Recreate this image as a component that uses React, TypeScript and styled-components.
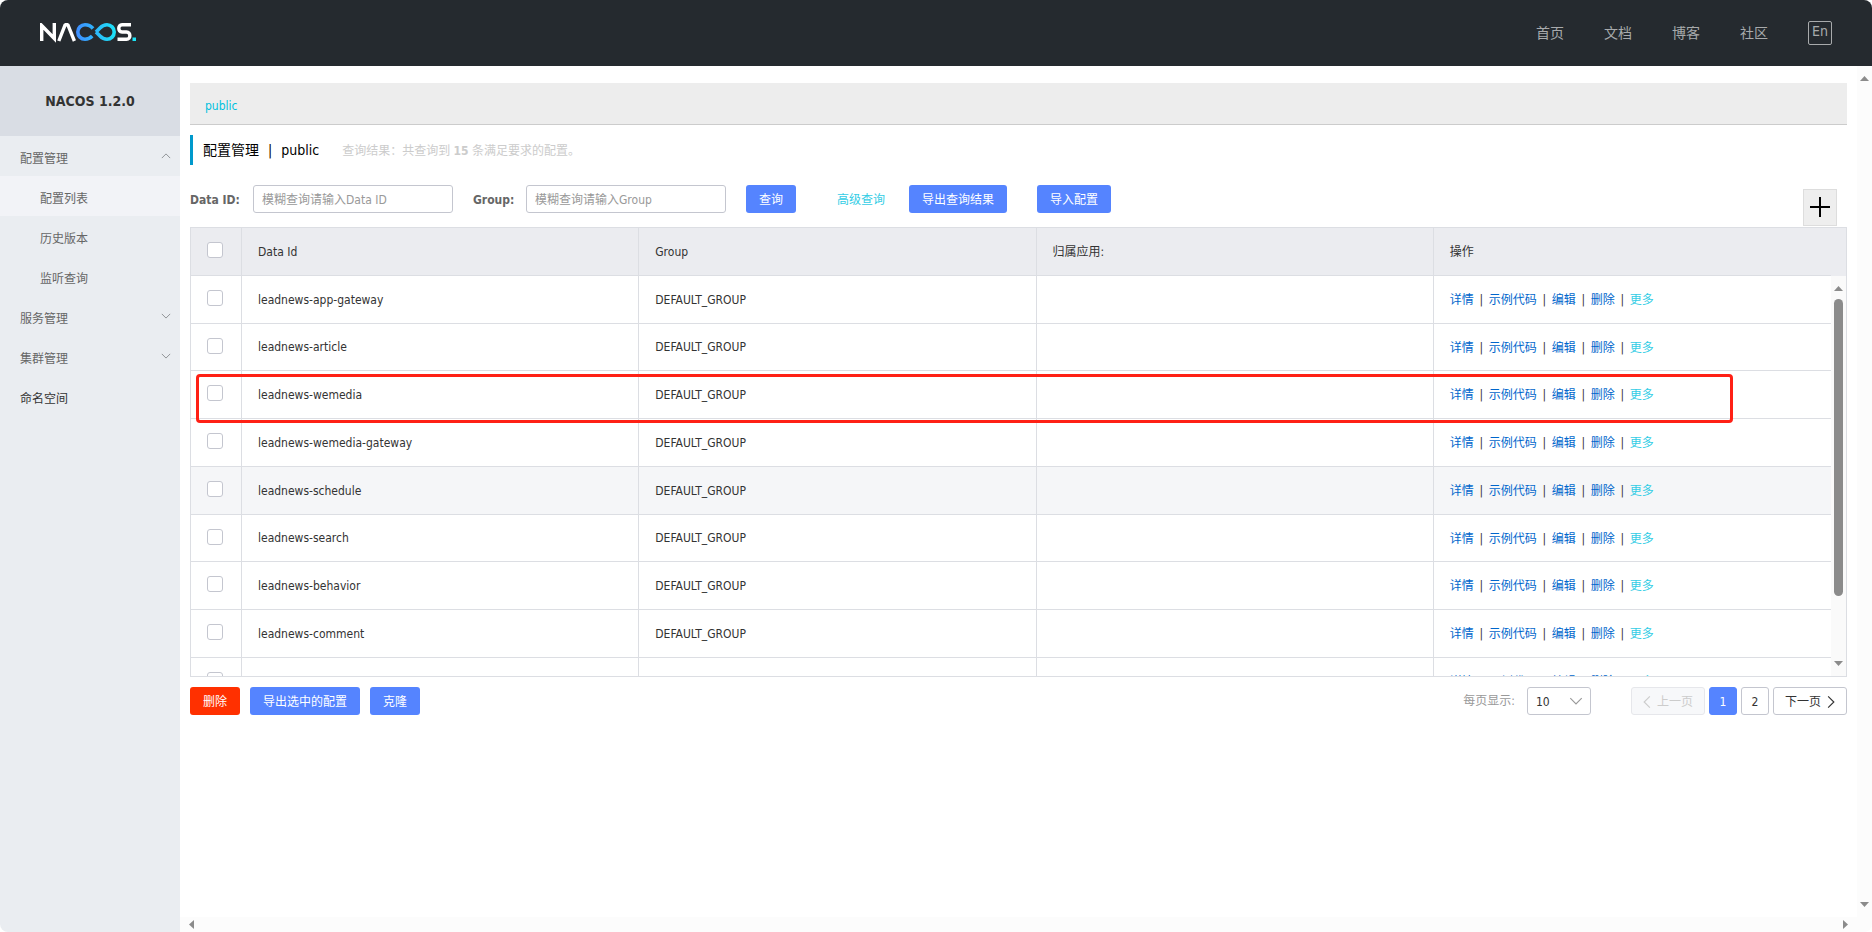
import React from "react";
import styled, { createGlobalStyle, css } from "styled-components";

const colors = {
  ink: "#333333",
  muted: "#666666",
  line: "#dcdee3",
  control: "#c4c6cf",
  primary: "#5584ff",
  danger: "#ff3000",
  cyan: "#33cde5",
  link: "#0066cc",
};

const GlobalStyle = createGlobalStyle`
  *, *::before, *::after { box-sizing: border-box; }
  body {
    margin: 0;
    background: #ffffff;
    color: ${colors.ink};
    font-family: "DejaVu Sans Condensed", "Noto Sans CJK SC", sans-serif;
    font-size: 12px;
    line-height: 16px;
  }
  button, input, select { font: inherit; color: inherit; }
  a { text-decoration: none; color: inherit; }
`;

const Page = styled.div`
  display: flex;
  flex-direction: column;
  min-height: 100vh;
`;

const Header = styled.header`
  display: flex;
  align-items: center;
  justify-content: space-between;
  height: 66px;
  padding: 0 40px;
  border-radius: 8px 8px 0 0;
  background: #252a2f;
`;

const Nav = styled.nav`
  display: flex;
  align-items: center;
  gap: 40px;
  color: #a8aaac;
  font-size: 14px;
`;

const LangButton = styled.button`
  width: 24px;
  height: 24px;
  padding: 0 0 3px;
  border: 1px solid #a8aaac;
  border-radius: 2px;
  background: none;
  line-height: 19px;
`;

const Body = styled.div`
  display: flex;
  flex: 1;
`;

const Sidebar = styled.aside`
  flex: none;
  width: 180px;
  background: #eaedf1;
  border-bottom-left-radius: 8px;
`;

const Product = styled.h1`
  margin: 0;
  background: #d9dde4;
  font-size: 14px;
  line-height: 70px;
  text-align: center;
`;

const Menu = styled.ul`
  margin: 0;
  padding: 0;
  list-style: none;
`;

const MenuLink = styled.a<{ $child?: boolean; $active?: boolean; $dark?: boolean }>`
  display: flex;
  align-items: center;
  justify-content: space-between;
  height: 40px;
  padding: 0 9px 0 ${(p) => (p.$child ? 40 : 20)}px;
  background: ${(p) => (p.$active ? "#f2f3f7" : "transparent")};
  color: ${(p) => (p.$dark ? colors.ink : colors.muted)};
`;

const MenuLabel = styled.span`
  padding-top: 6px;
`;

const Main = styled.main`
  display: grid;
  flex: 1;
  min-width: 0;
  grid-template-columns: minmax(0, 1fr) 15px;
  grid-template-rows: 1fr 15px;
`;

const Content = styled.div`
  padding: 17px 10px 0;
`;

const PageRail = styled.div`
  display: flex;
  flex-direction: column;
  justify-content: space-between;
  align-items: center;
  padding: 10px 0;
  background: #fcfcfc;
`;

const PageBottomRail = styled.div`
  display: flex;
  grid-column: 1 / 3;
  justify-content: space-between;
  align-items: center;
  padding: 0 24px 0 9px;
  border-bottom-right-radius: 8px;
  background: #fcfcfc;
`;

const Arrow = styled.i<{ $dir: "up" | "down" | "left" | "right" }>`
  display: block;
  flex: none;
  background: #8b8b8b;
  ${(p) =>
    p.$dir === "up" || p.$dir === "down"
      ? css`
          width: 9px;
          height: 5px;
        `
      : css`
          width: 5px;
          height: 9px;
        `}
  clip-path: ${(p) =>
    ({
      up: "polygon(50% 0, 100% 100%, 0 100%)",
      down: "polygon(0 0, 100% 0, 50% 100%)",
      left: "polygon(0 50%, 100% 0, 100% 100%)",
      right: "polygon(0 0, 100% 50%, 0 100%)",
    })[p.$dir]};
`;

const NamespaceBar = styled.div`
  height: 42px;
  padding: 15px;
  border-bottom: 1px solid #cccccc;
  background: #ededed;
  color: #00c1de;
`;

const TitleRow = styled.div`
  display: flex;
  align-items: center;
  height: 30px;
  margin-top: 10px;
  padding-left: 10px;
  border-left: 3px solid #0099cc;
`;

const Title = styled.h2`
  display: flex;
  gap: 9px;
  margin: 0 23px 0 0;
  color: #000000;
  font-size: 14px;
  font-weight: 400;
`;

const Summary = styled.span`
  padding-top: 2px;
  color: #cccccc;
`;

const SearchForm = styled.form`
  display: flex;
  align-items: flex-start;
  height: 42px;
  margin-top: 20px;
  padding-right: 10px;
`;

const Field = styled.label<{ $labelWidth: number }>`
  display: grid;
  grid-template-columns: ${(p) => p.$labelWidth}px 200px;
  align-items: center;
  margin-right: 20px;
  color: ${colors.muted};
  font-weight: 700;
`;

const FieldName = styled.span`
  padding-top: 2px;
`;

const TextInput = styled.input`
  height: 28px;
  padding: 2px 8px 0;
  border: 1px solid ${colors.control};
  border-radius: 3px;
  background: #ffffff;
  font-weight: 400;
  &::placeholder {
    color: #999999;
    opacity: 1;
  }
`;

const Button = styled.button<{ $danger?: boolean }>`
  height: 28px;
  padding: 2px 13px 0;
  border: 0;
  border-radius: 3px;
  background: ${(p) => (p.$danger ? colors.danger : colors.primary)};
  color: #ffffff;
  white-space: nowrap;
`;

const AdvancedLink = styled.a`
  margin: 0 24px 0 40px;
  padding: 7px 0 5px 1px;
  color: ${colors.cyan};
`;

const ImportButton = styled(Button)`
  margin-left: 30px;
`;

const AddButton = styled.button`
  display: grid;
  place-items: center;
  width: 34px;
  height: 37px;
  margin: 4px 0 0 auto;
  padding: 0 0 2px;
  border: 1px solid #dddddd;
  background: #eeeeee;
  color: #000000;
`;

const TableFrame = styled.div`
  position: relative;
  border: 1px solid ${colors.line};
`;

const TableHead = styled.div`
  padding-right: 15px;
  background: #ebecf0;
`;

const TableBody = styled.div`
  display: flex;
  height: 400px;
`;

const Viewport = styled.div`
  flex: 1;
  min-width: 0;
  overflow-y: auto;
  scrollbar-width: none;
`;

const Rail = styled.div`
  display: flex;
  flex: none;
  flex-direction: column;
  align-items: center;
  width: 15px;
  padding: 10px 0;
  background: #fafafa;
`;

const Thumb = styled.div`
  width: 9px;
  height: 297px;
  margin: 8px 0 auto;
  border-radius: 5px;
  background: #8b8b8b;
`;

const Table = styled.table`
  width: 100%;
  table-layout: fixed;
  border-collapse: separate;
  border-spacing: 0;
`;

const cell = css`
  padding: 0 16px;
  border-right: 1px solid ${colors.line};
  border-bottom: 1px solid ${colors.line};
  font-weight: 400;
  text-align: left;
  vertical-align: middle;
  white-space: nowrap;
  &:first-child {
    width: 51px;
  }
  &:last-child {
    border-right: 0;
  }
`;

const Th = styled.th`
  ${cell}
`;

const Td = styled.td`
  ${cell}
`;

const Row = styled.tr<{ $hover?: boolean }>`
  height: 48px;
  background: ${(p) => (p.$hover ? "#f5f6f8" : "transparent")};
  tbody &:nth-child(4n + 2) {
    height: 47px;
  }
`;

const Checkbox = styled.input`
  display: block;
  width: 16px;
  height: 16px;
  margin: 0 0 3px;
  appearance: none;
  border: 1px solid ${colors.control};
  border-radius: 3px;
  background: #ffffff;
`;

const Actions = styled.div`
  display: flex;
  gap: 5px;
  padding-top: 1px;
  color: ${colors.ink};
`;

const Divider = styled.span`
  width: 5px;
  text-align: center;
`;

const ActionLink = styled.a<{ $more?: boolean }>`
  color: ${(p) => (p.$more ? colors.cyan : colors.link)};
`;

const Highlight = styled.div`
  position: absolute;
  top: 146px;
  right: 113px;
  left: 5px;
  height: 49px;
  border: 3px solid #ff2015;
  border-radius: 4px;
  pointer-events: none;
`;

const Footer = styled.div`
  display: flex;
  justify-content: space-between;
  margin-top: 10px;
`;

const ButtonGroup = styled.div`
  display: flex;
  gap: 10px;
`;

const Pagination = styled.div`
  display: flex;
  gap: 4px;
`;

const PageSize = styled.label`
  display: flex;
  align-items: center;
  gap: 12px;
  margin-right: 36px;
  color: #999999;
`;

const SelectBox = styled.span`
  display: grid;
  grid-template-columns: 1fr 28px;
  align-items: center;
  width: 64px;
  height: 28px;
  border: 1px solid ${colors.control};
  border-radius: 3px;
  color: #999999;
`;

const Select = styled.select`
  grid-area: 1 / 1 / 2 / 3;
  height: 26px;
  padding: 1px 8px 0;
  appearance: none;
  border: 0;
  background: none;
  color: ${colors.ink};
`;

const SelectIcon = styled.span`
  display: flex;
  grid-area: 1 / 2 / 2 / 3;
  justify-content: center;
  pointer-events: none;
`;

const PageButton = styled.button<{ $current?: boolean; $wide?: boolean }>`
  display: flex;
  align-items: center;
  justify-content: center;
  gap: 6px;
  width: ${(p) => (p.$wide ? 74 : 28)}px;
  height: 28px;
  padding: 1px 0 0;
  border: 1px solid ${(p) => (p.$current ? colors.primary : colors.control)};
  border-radius: 3px;
  background: ${(p) => (p.$current ? colors.primary : "#ffffff")};
  color: ${(p) => (p.$current ? "#ffffff" : colors.ink)};
  &:disabled {
    border-color: #e6e7eb;
    background: #f7f8fa;
    color: #cccccc;
  }
`;

const chevronPaths = {
  up: "M1 6 L6 1 L11 6",
  down: "M1 1 L6 6 L11 1",
  left: "M6 1 L1 6 L6 11",
  right: "M1 1 L6 6 L1 11",
};

function Chevron({ dir, size, color = "currentColor" }: { dir: keyof typeof chevronPaths; size: number; color?: string }) {
  const horizontal = dir === "left" || dir === "right";
  return (
    <svg
      width={horizontal ? Math.round(size * 0.6) : size}
      height={horizontal ? size : Math.round(size * 0.6)}
      viewBox={horizontal ? "0 0 7 12" : "0 0 12 7"}
      fill="none"
      stroke={color}
      strokeWidth="1"
      aria-hidden="true"
    >
      <path d={chevronPaths[dir]} />
    </svg>
  );
}

function Logo() {
  return (
    <svg width="96" height="20" viewBox="0 0 96 20" fill="none" role="img" aria-label="NACOS">
      <defs>
        <linearGradient id="loop" x1="36" y1="0" x2="76" y2="0" gradientUnits="userSpaceOnUse">
          <stop offset="0" stopColor="#3f8cff" />
          <stop offset="1" stopColor="#1be4f7" />
        </linearGradient>
      </defs>
      <g stroke="#ffffff" strokeWidth="3.4">
        <path d="M1.700 18V2.500L14.300 15.500V0" />
        <path d="M18.800 18L25.200 1.700H27.800L34.400 18" strokeLinejoin="bevel" />
        <path d="M91 1.700H82C77.700 1.700 77.700 9 82 9H86.500C91 9 91 16.300 86.500 16.300H77.500" />
      </g>
      <path
        d="M53 5.500C50.800 2.900 48 1.800 45 1.800C41 1.800 37.800 4.900 37.800 9S41 16.200 45 16.200C48 16.200 50.200 15.100 52.200 13M56 9L60 4.900C62 2.900 64 1.800 67 1.800C71 1.800 74.200 4.900 74.200 9S71 16.200 67 16.200C64 16.200 62 15.100 60 13L56 9"
        stroke="url(#loop)"
        strokeWidth="3.600"
      />
      <rect x="92.500" y="14.500" width="3.500" height="3.500" fill="#1be4f7" />
    </svg>
  );
}

function Plus() {
  return (
    <svg width="20" height="20" viewBox="0 0 20 20" stroke="currentColor" strokeWidth="2" aria-hidden="true">
      <path d="M10 0V20M0 10H20" />
    </svg>
  );
}

const rows = [
  "leadnews-app-gateway",
  "leadnews-article",
  "leadnews-wemedia",
  "leadnews-wemedia-gateway",
  "leadnews-schedule",
  "leadnews-search",
  "leadnews-behavior",
  "leadnews-comment",
  "leadnews-admin-dateway",
];

const menu: { label: string; child?: boolean; active?: boolean; dark?: boolean; arrow?: "up" | "down" }[] = [
  { label: "配置管理", arrow: "up" },
  { label: "配置列表", child: true, active: true },
  { label: "历史版本", child: true },
  { label: "监听查询", child: true },
  { label: "服务管理", arrow: "down" },
  { label: "集群管理", arrow: "down" },
  { label: "命名空间", dark: true },
];

const actions = ["详情", "示例代码", "编辑", "删除"];

export default function App() {
  return (
    <Page>
      <GlobalStyle />
      <Header>
        <Logo />
        <Nav>
          {["首页", "文档", "博客", "社区"].map((label) => (
            <a href="#" key={label}>
              {label}
            </a>
          ))}
          <LangButton type="button">En</LangButton>
        </Nav>
      </Header>
      <Body>
        <Sidebar>
          <Product>NACOS 1.2.0</Product>
          <Menu>
            {menu.map((item) => (
              <li key={item.label}>
                <MenuLink href="#" $child={item.child} $active={item.active} $dark={item.dark}>
                  <MenuLabel>{item.label}</MenuLabel>
                  {item.arrow && <Chevron dir={item.arrow} size={10} color="#808285" />}
                </MenuLink>
              </li>
            ))}
          </Menu>
        </Sidebar>
        <Main>
          <Content>
            <NamespaceBar>
              <a href="#">public</a>
            </NamespaceBar>
            <TitleRow>
              <Title>
                <span>配置管理</span>
                <span>|</span>
                <span>public</span>
              </Title>
              <Summary>
                查询结果：共查询到 <strong>15</strong> 条满足要求的配置。
              </Summary>
            </TitleRow>
            <SearchForm onSubmit={(e) => e.preventDefault()}>
              <Field $labelWidth={63}>
                <FieldName>Data ID:</FieldName>
                <TextInput type="text" placeholder="模糊查询请输入Data ID" />
              </Field>
              <Field $labelWidth={53}>
                <FieldName>Group:</FieldName>
                <TextInput type="text" placeholder="模糊查询请输入Group" />
              </Field>
              <Button type="submit">查询</Button>
              <AdvancedLink href="#">高级查询</AdvancedLink>
              <Button type="button">导出查询结果</Button>
              <ImportButton type="button">导入配置</ImportButton>
              <AddButton type="button" aria-label="新建配置">
                <Plus />
              </AddButton>
            </SearchForm>
            <TableFrame>
              <TableHead>
                <Table>
                  <thead>
                    <Row>
                      <Th>
                        <Checkbox type="checkbox" aria-label="全选" />
                      </Th>
                      <Th>Data Id</Th>
                      <Th>Group</Th>
                      <Th>归属应用:</Th>
                      <Th>操作</Th>
                    </Row>
                  </thead>
                </Table>
              </TableHead>
              <TableBody>
                <Viewport>
                  <Table>
                    <tbody>
                      {rows.map((name) => (
                        <Row key={name} $hover={name === "leadnews-schedule"}>
                          <Td>
                            <Checkbox type="checkbox" aria-label={name} />
                          </Td>
                          <Td>{name}</Td>
                          <Td>DEFAULT_GROUP</Td>
                          <Td />
                          <Td>
                            <Actions>
                              {actions.map((label) => (
                                <React.Fragment key={label}>
                                  <ActionLink href="#">{label}</ActionLink>
                                  <Divider>|</Divider>
                                </React.Fragment>
                              ))}
                              <ActionLink href="#" $more>
                                更多
                              </ActionLink>
                            </Actions>
                          </Td>
                        </Row>
                      ))}
                    </tbody>
                  </Table>
                </Viewport>
                <Rail>
                  <Arrow $dir="up" />
                  <Thumb />
                  <Arrow $dir="down" />
                </Rail>
              </TableBody>
              <Highlight />
            </TableFrame>
            <Footer>
              <ButtonGroup>
                <Button type="button" $danger>
                  删除
                </Button>
                <Button type="button">导出选中的配置</Button>
                <Button type="button">克隆</Button>
              </ButtonGroup>
              <Pagination>
                <PageSize>
                  每页显示:
                  <SelectBox>
                    <Select defaultValue="10">
                      <option>10</option>
                      <option>20</option>
                      <option>30</option>
                    </Select>
                    <SelectIcon>
                      <Chevron dir="down" size={14} />
                    </SelectIcon>
                  </SelectBox>
                </PageSize>
                <PageButton type="button" $wide disabled>
                  <Chevron dir="left" size={14} />
                  上一页
                </PageButton>
                <PageButton type="button" $current>
                  1
                </PageButton>
                <PageButton type="button">2</PageButton>
                <PageButton type="button" $wide>
                  下一页
                  <Chevron dir="right" size={14} />
                </PageButton>
              </Pagination>
            </Footer>
          </Content>
          <PageRail>
            <Arrow $dir="up" />
            <Arrow $dir="down" />
          </PageRail>
          <PageBottomRail>
            <Arrow $dir="left" />
            <Arrow $dir="right" />
          </PageBottomRail>
        </Main>
      </Body>
    </Page>
  );
}
